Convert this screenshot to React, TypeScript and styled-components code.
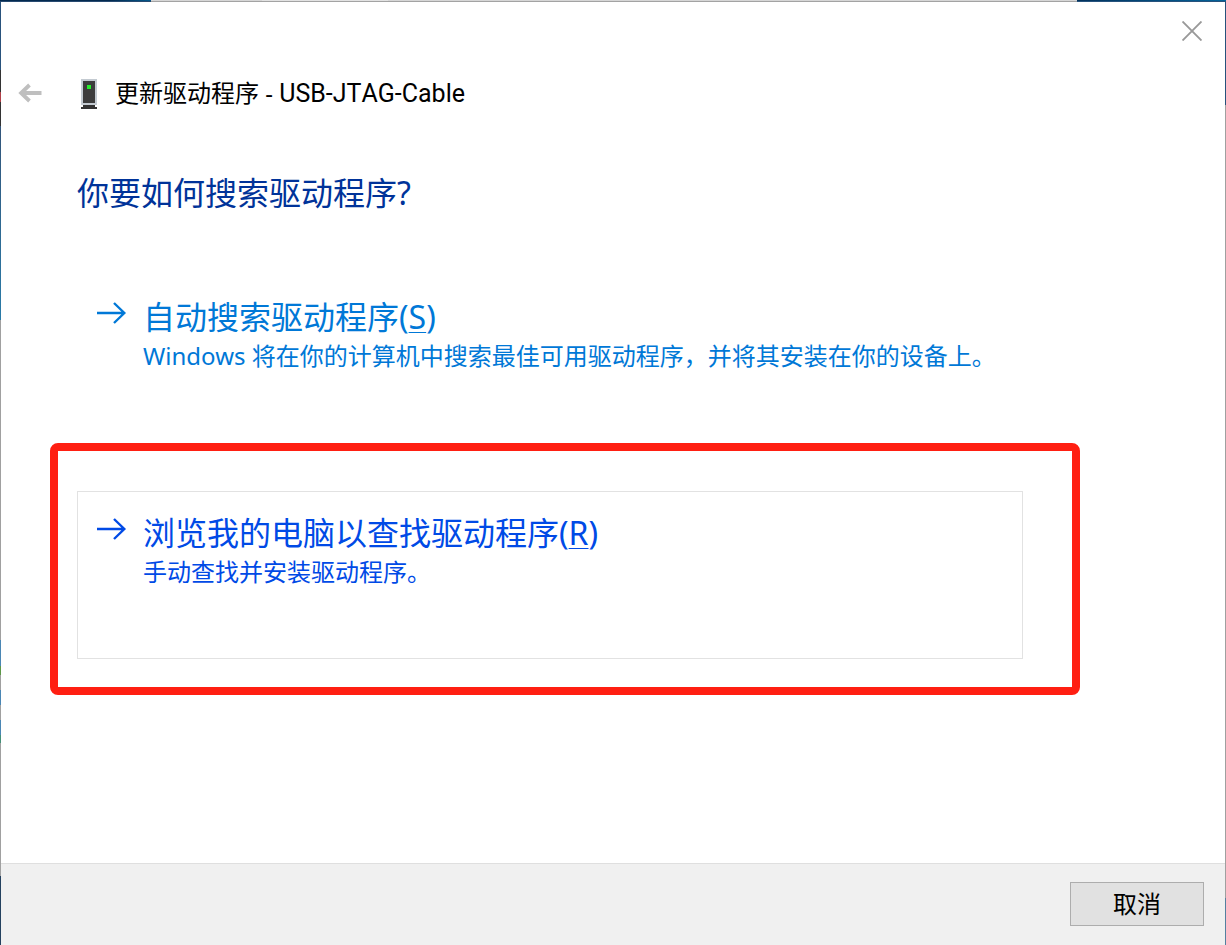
import React from 'react';
import styled, { createGlobalStyle } from 'styled-components';

const GlobalStyle = createGlobalStyle`
  * {
    box-sizing: border-box;
  }
  body {
    margin: 0;
    font-family: 'Noto Sans', 'Noto Sans CJK SC', sans-serif;
    color: #000;
  }
  h1, h2, p {
    margin: 0;
    font-weight: 400;
  }
  button {
    font: inherit;
    color: inherit;
    padding: 0;
    border: 0;
    background: none;
    cursor: pointer;
  }
`;

const Desktop = styled.div`
  display: flex;
  min-height: 100vh;
  padding: 2px 1px 0;
  background:
    linear-gradient(90deg, #02294f 0 110px, #04588c 151px, transparent 151px) top left / 100% 1px no-repeat,
    linear-gradient(90deg, #d6d6d6 0 262px, #e2e2e2 262px 388px, #d6d6d6 388px calc(100% - 149px), #02315c calc(100% - 149px), #04639a) top left / 100% 1px no-repeat,
    linear-gradient(90deg, #274a70 0 151px, #a3a3a3 151px calc(100% - 149px), #26527c calc(100% - 149px)) 0 1px / 100% 1px no-repeat,
    linear-gradient(180deg, #29527c 0 70px, #333 70px 92px, #b04048 92px 102px, #333 102px 126px, #33557a 126px, #2a7ba8 320px, #a0a0a0 320px 640px, #4a86b4 640px 666px, #5d9848 666px 675px, #a0a0a0 675px 690px, #4a86b4 690px 705px, #a0a0a0 705px 720px, #4a86b4 720px 735px, #449078 735px 743px, #a0a0a0 743px 876px, #24415f 876px) left / 1px 100% no-repeat,
    linear-gradient(180deg, #26527c 0 105px, #a0a0a0 105px 898px, #55809f 898px) right / 1px 100% no-repeat;
`;

const Dialog = styled.main`
  display: flex;
  flex: 1;
  flex-direction: column;
  background: #fff;
`;

const CaptionBar = styled.div`
  display: flex;
  justify-content: flex-end;
  height: 58px;
`;

const CloseButton = styled.button`
  display: grid;
  place-items: center;
  width: 66px;
  height: 58px;
`;

const Header = styled.header`
  display: flex;
  align-items: center;
  height: 66px;
`;

const BackButton = styled.button`
  display: grid;
  place-items: center;
  width: 58px;
  height: 48px;
`;

const DeviceIcon = styled.svg`
  margin: 0 18px 0 22px;
`;

const Title = styled.h1`
  font-size: 24px;
  line-height: 32px;
`;

const DeviceName = styled.span`
  font-family: Roboto, 'Noto Sans', sans-serif;
  font-size: 25px;
  font-kerning: none;
`;

const Content = styled.section`
  flex: 1;
  padding: 47px 145px 48px 49px;
`;

const Question = styled.h2`
  margin: 0 27px 62px;
  font-size: 32px;
  line-height: 40px;
  color: #003399;
`;

const CommandLink = styled.button<{ $active?: boolean }>`
  display: flex;
  align-items: flex-start;
  gap: 15px;
  width: 100%;
  min-height: 168px;
  padding: 18px;
  border: 1px solid ${({ $active }) => ($active ? '#e2e2e2' : 'transparent')};
  color: ${({ $active }) => ($active ? '#004ae6' : '#0078d7')};
  text-align: left;
`;

const PlainOption = styled.div`
  padding: 0 57px 0 27px;
`;

const HighlightedOption = styled.div`
  padding: 40px 49px 28px 19px;
  border: 8px solid #ff1f12;
  border-radius: 8px;
`;

const LinkText = styled.span`
  display: flex;
  flex-direction: column;
`;

const LinkTitle = styled.span`
  font-size: 32px;
  line-height: 46px;
`;

const LinkNote = styled.span`
  font-size: 24px;
  line-height: 32px;
`;

const AccessKey = styled.u`
  text-decoration-thickness: 1px;
  text-underline-offset: 3px;
`;

const Footer = styled.footer`
  display: flex;
  justify-content: flex-end;
  padding: 18px 21px 19px;
  border-top: 1px solid #dfdfdf;
  background: #f0f0f0;
`;

const CancelButton = styled.button`
  width: 134px;
  height: 44px;
  border: 1px solid #adadad;
  background: #e1e1e1;
  font-size: 24px;
  line-height: 32px;
`;

const LinkArrow = () => (
  <svg width="32" height="38" viewBox="0 0 32 38" fill="none" stroke="currentColor" strokeWidth="2.4" aria-hidden="true">
    <path d="M1 19H28M18 9L28.3 19L18 29" />
  </svg>
);

export default function App() {
  return (
    <>
      <GlobalStyle />
      <Desktop>
        <Dialog>
          <CaptionBar>
            <CloseButton aria-label="关闭">
              <svg width="20" height="20" viewBox="0 0 20 20" fill="none" stroke="#999" strokeWidth="1.9">
                <path d="M.5.5L19.5 19.5M19.5.5L.5 19.5" />
              </svg>
            </CloseButton>
          </CaptionBar>
          <Header>
            <BackButton aria-label="返回">
              <svg width="24" height="20" viewBox="0 0 24 20" fill="none" stroke="#bfbfbf" strokeWidth="3.8">
                <path d="M23.5 10H3.5M11.5 2L3.1 10L11.5 18" />
              </svg>
            </BackButton>
            <DeviceIcon width="16" height="32" viewBox="0 -2 16 32" shapeRendering="crispEdges" aria-hidden="true">
              <path fill="#c3cad1" d="M0 0H16V26H0Z" />
              <path fill="#3d3d3d" d="M2 2H14V24H2Z" />
              <path fill="#25ed2b" d="M6 6H10V10H6Z" />
              <path fill="#333" d="M2 26H14V28H16V30H0V28H2Z" />
            </DeviceIcon>
            <Title>更新驱动程序 - <DeviceName>USB-JTAG-Cable</DeviceName></Title>
          </Header>
          <Content>
            <Question>你要如何搜索驱动程序?</Question>
            <PlainOption>
              <CommandLink>
                <LinkArrow />
                <LinkText>
                  <LinkTitle>自动搜索驱动程序(<AccessKey>S</AccessKey>)</LinkTitle>
                  <LinkNote>Windows 将在你的计算机中搜索最佳可用驱动程序，并将其安装在你的设备上。</LinkNote>
                </LinkText>
              </CommandLink>
            </PlainOption>
            <HighlightedOption>
              <CommandLink $active>
                <LinkArrow />
                <LinkText>
                  <LinkTitle>浏览我的电脑以查找驱动程序(<AccessKey>R</AccessKey>)</LinkTitle>
                  <LinkNote>手动查找并安装驱动程序。</LinkNote>
                </LinkText>
              </CommandLink>
            </HighlightedOption>
          </Content>
          <Footer>
            <CancelButton>取消</CancelButton>
          </Footer>
        </Dialog>
      </Desktop>
    </>
  );
}
